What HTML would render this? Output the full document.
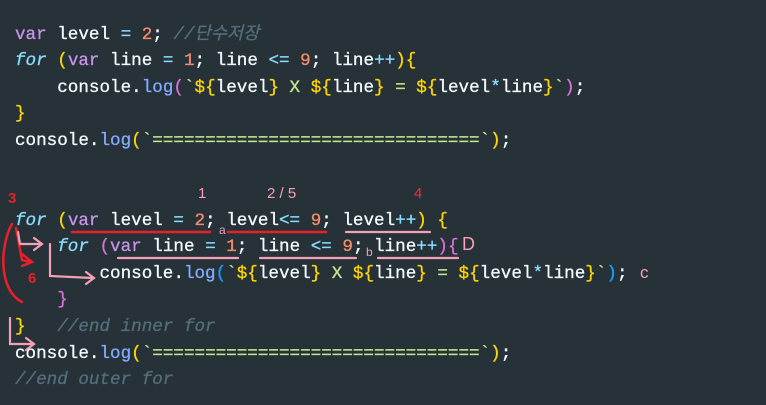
<!DOCTYPE html>
<html><head><meta charset="utf-8"><style>
html,body{margin:0;padding:0;background:#263238;width:766px;height:405px;overflow:hidden}
pre{position:absolute;left:15px;top:21.5px;margin:0;font-family:"Liberation Mono","Noto Sans CJK KR",monospace;font-size:17.6px;line-height:26.6px;color:#f4fbff;-webkit-text-stroke:0.3px currentColor}
.k{color:#c792ea}.f{color:#89ddff;font-style:italic}.n{color:#f78c6c}.c{color:#546e7a;font-style:italic}
.p{color:#ffd700}.q{color:#da70d6}.b{color:#179fff}.m{color:#82aaff}.s{color:#c3e88d}.o{color:#89ddff}
.ann{position:absolute;font-family:"Liberation Sans",sans-serif}
</style></head><body>
<pre><span class="k">var</span> level <span class="o">=</span> <span class="n">2</span>; <span class="c">//단수저장</span>
<span class="f">for</span> <span class="p">(</span><span class="k">var</span> line <span class="o">=</span> <span class="n">1</span>; line <span class="o">&lt;=</span> <span class="n">9</span>; line<span class="o">++</span><span class="p">)</span><span class="p">{</span>
    console.<span class="m">log</span><span class="q">(</span><span class="s">`</span><span class="p">${</span>level<span class="p">}</span><span class="s"> X </span><span class="p">${</span>line<span class="p">}</span><span class="s"> = </span><span class="p">${</span>level<span class="o">*</span>line<span class="p">}</span><span class="s">`</span><span class="q">)</span>;
<span class="p">}</span>
console.<span class="m">log</span><span class="p">(</span><span class="s">`===============================`</span><span class="p">)</span>;


<span class="f">for</span> <span class="p">(</span><span class="k">var</span> level <span class="o">=</span> <span class="n">2</span>; level<span class="o">&lt;=</span> <span class="n">9</span>; level<span class="o">++</span><span class="p">)</span> <span class="p">{</span>
    <span class="f">for</span> <span class="q">(</span><span class="k">var</span> line <span class="o">=</span> <span class="n">1</span>; line <span class="o">&lt;=</span> <span class="n">9</span>; line<span class="o">++</span><span class="q">)</span><span class="q">{</span>
        console.<span class="m">log</span><span class="b">(</span><span class="s">`</span><span class="p">${</span>level<span class="p">}</span><span class="s"> X </span><span class="p">${</span>line<span class="p">}</span><span class="s"> = </span><span class="p">${</span>level<span class="o">*</span>line<span class="p">}</span><span class="s">`</span><span class="b">)</span>;
    <span class="q">}</span>
<span class="p">}</span>   <span class="c">//end inner for</span>
console.<span class="m">log</span><span class="p">(</span><span class="s">`===============================`</span><span class="p">)</span>;
<span class="c">//end outer for</span></pre>
<div class="ann" style="left:198px;top:185px;font-size:15px;color:#f4a0b8">1</div>
<div class="ann" style="left:267px;top:185px;font-size:15px;color:#f4a0b8">2 / 5</div>
<div class="ann" style="left:414px;top:185px;font-size:15px;color:#e8303a">4</div>
<div class="ann" style="left:8px;top:190px;font-size:15px;color:#e8202a;font-weight:bold">3</div>
<div class="ann" style="left:28px;top:270px;font-size:15px;color:#e8202a;font-weight:bold">6</div>
<div class="ann" style="left:219px;top:223px;font-size:12px;color:#f4a0b8">a</div>
<div class="ann" style="left:366px;top:245px;font-size:12px;color:#f4a0b8">b</div>
<div class="ann" style="left:462px;top:234px;font-size:18px;color:#f4a0b8">D</div>
<div class="ann" style="left:640px;top:263px;font-size:17px;color:#f4a0b8">c</div>
<svg width="766" height="405" style="position:absolute;left:0;top:0" fill="none" stroke-linecap="round">
<g stroke="#e8202a" stroke-width="2.5">
<path d="M72 232 H210 M228 232 H326"/>
<path d="M12 224 C0 245 -2 290 22 302"/>
<path d="M16 228 L22 260 L30 262 M22 254 L32 262 L22 266"/>
</g>
<g stroke="#f4a0b8" stroke-width="2.2">
<path d="M346 232 H430"/>
<path d="M118 258 H238 M260 258 H356 M378 258 H458"/>
<path d="M18 232 L20 244 H40 M34 238 L42 244 L34 250"/>
<path d="M50 244 V276 L92 278 M86 272 L94 278 L86 284"/>
<path d="M10 318 V344 H32 M26 338 L34 344 L26 350"/>
</g>
</svg>
</body></html>
